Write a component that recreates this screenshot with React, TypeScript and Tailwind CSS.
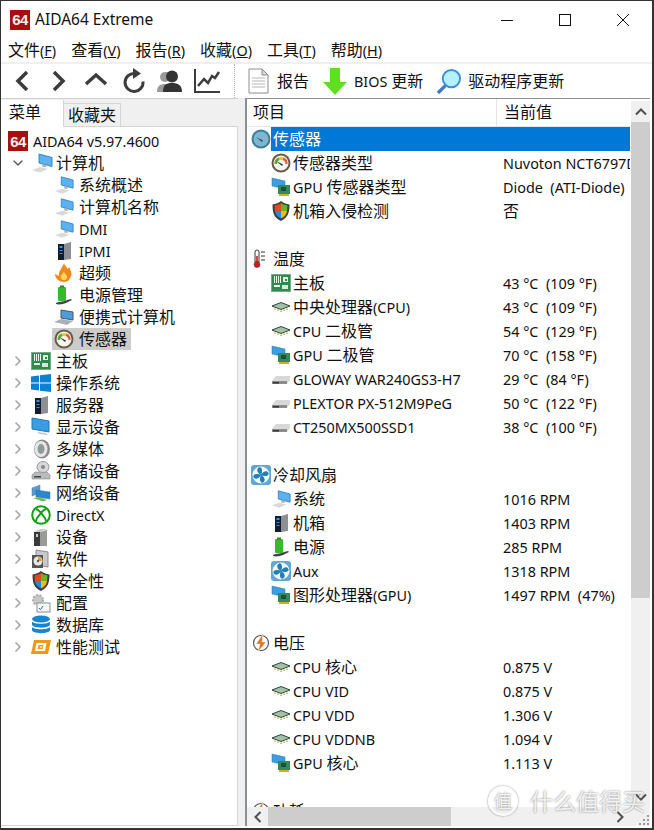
import React from 'react';
import { ChevronRight, ChevronDown } from 'lucide-react';

const CJK = /([\u2E80-\u9FFF]+)/;

// YaHei-looking mix: Chinese runs at 16px, latin runs a bit smaller
const T = ({ text }: { text: string }) => (
  <span className="whitespace-pre">
    {text.split(CJK).map((part, i) =>
      CJK.test(part) ? (
        <span key={i} className="text-[16px]">{part}</span>
      ) : (
        <span key={i} className="text-[14.4px]">{part}</span>
      ),
    )}
  </span>
);

const Logo64 = () => (
  <div className="w-5 h-5 bg-[#a80e0e] text-[#f4f0f0] font-bold flex items-center justify-center shrink-0 text-[15px] tracking-[-0.5px] font-['Liberation_Sans',sans-serif]">
    64
  </div>
);

const Monitor = () => (
  <svg width="22" height="20" viewBox="0 0 22 20">
    <path d="M8 1l13 3.500v9L8 10z" fill="#5ab2ee" stroke="#3a86c4" strokeWidth="1" />
    <path d="M1 17l8-3 8 2-8 3.500z" fill="#d9d9d9" />
    <path d="M11 11l.5 3h4l-1-2z" fill="#b0b0b0" />
  </svg>
);
const Server = () => (
  <svg width="20" height="20" viewBox="0 0 20 20">
    <path d="M4 3h6v16H4z" fill="#101c30" />
    <path d="M10 3l7-2v17l-7 1z" fill="#8d8f94" />
    <path d="M5.500 5h3v2h-3zM5.500 9h3v1h-3zM5.500 12h3v1h-3z" fill="#3d8fdc" />
  </svg>
);
const Flame = () => (
  <svg width="20" height="20" viewBox="0 0 20 20">
    <path d="M10 0c1 4 3 3 3 6 1-1 2-1 2-2 2 4 4 8 1 11-1 3-4 4-6 4-4 0-9-3-9-8l4 2C4 8 8 6 10 0z" fill="#f0891c" />
    <path d="M10 8c0 3 4 4 3 7-1 3-5 3-6 0-1-3 2-4 3-7z" fill="#fdd55a" />
  </svg>
);
const Battery = () => (
  <svg width="20" height="20" viewBox="0 0 20 20">
    <rect x="4" y="2" width="8" height="14" rx="1" fill="#38b82f" />
    <rect x="6" y="0.500" width="4" height="2" fill="#2c8c29" />
    <path d="M2 18c3-2 9-1 11-3l4-1 1 1-4 2c-3 2-9 3-12 2z" fill="#444" />
  </svg>
);
const Laptop = () => (
  <svg width="20" height="20" viewBox="0 0 20 20">
    <path d="M7 3l12 2v8l-12-2z" fill="#4a9de0" stroke="#555" />
    <path d="M0 15l7-3 12 2-6 4z" fill="#aab0b5" />
  </svg>
);
const Gauge = ({ dark = false }: { dark?: boolean }) => (
  <svg width="20" height="20" viewBox="0 0 20 20">
    <circle cx="10" cy="10" r="9.500" fill={dark ? '#3b7e9b' : '#6a5a44'} />
    <circle cx="10" cy="10" r="7.500" fill={dark ? '#7fb6cf' : '#f6f4ee'} />
    {!dark && <path d="M3.500 11a6.500 6.500 0 0 1 4-6.500L9 7a4 4 0 0 0-3 4z" fill="#54ae3a" />}
    {!dark && <path d="M7.500 4.500a6.500 6.500 0 0 1 5 0L11 7H9z" fill="#e9c22f" />}
    {!dark && <path d="M12.500 4.500a6.500 6.500 0 0 1 4 6.500h-2a4 4 0 0 0-3-4z" fill="#e4562c" />}
    <path d="M5 8l7 3.500-1 1.500z" fill={dark ? '#204f66' : '#333'} />
  </svg>
);
const Board = () => (
  <svg width="20" height="18" viewBox="0 0 20 18">
    <rect x="0.500" y="0.500" width="19" height="17" fill="#2f8a4d" stroke="#7aa88a" />
    <path d="M3 2h1v7H3zM5 2h1v7H5zM7 2h1v7H7zM9 2h1v7H9z" fill="#eef5ee" />
    <rect x="12" y="3" width="5" height="5" fill="#e5efe5" />
    <rect x="14" y="5" width="2" height="2" fill="#2f8a4d" />
    <rect x="3" y="11" width="6" height="2" fill="#eef5ee" />
    <rect x="11" y="11" width="6" height="4" fill="#d9e8dc" />
  </svg>
);
const Windows = () => (
  <svg width="20" height="20" viewBox="0 0 20 20">
    <path d="M0 3.500l8-1v7H0zM9 2.300L20 1v8.500H9zM0 10.500h8v7l-8-1zM9 10.500h11V19L9 17.700z" fill="#0f7fd0" />
  </svg>
);
const Display = () => (
  <svg width="20" height="20" viewBox="0 0 20 20">
    <path d="M1 1l17 3v11L1 12z" fill="#3a9de2" stroke="#2176b8" />
    <path d="M6 15l9 1 2 2-9-1z" fill="#c9c9c9" />
  </svg>
);
const Speaker = () => (
  <svg width="20" height="20" viewBox="0 0 20 20">
    <ellipse cx="11" cy="10" rx="8" ry="9.500" fill="#8b8b8b" />
    <ellipse cx="10" cy="10" rx="6.500" ry="8" fill="#e6e6e6" />
    <ellipse cx="10" cy="10" rx="3.500" ry="5" fill="#8f9a9a" />
  </svg>
);
const Storage = () => (
  <svg width="20" height="20" viewBox="0 0 20 20">
    <path d="M1 14l3-3h12l3 3v4H1z" fill="#b9bcbc" stroke="#777" strokeWidth="0.500" />
    <rect x="3" y="15" width="7" height="1.500" fill="#444" />
    <ellipse cx="12" cy="6" rx="6" ry="5.500" fill="#d8d8d8" stroke="#999" />
    <circle cx="12" cy="6" r="2" fill="#888" />
  </svg>
);
const Network = () => (
  <svg width="20" height="18" viewBox="0 0 20 18">
    <path d="M1 4l8-3v8l-8 3z" fill="#4a9de0" stroke="#777" strokeWidth="0.500" />
    <path d="M5 6l14 2v7L5 13z" fill="#2a86d0" stroke="#666" strokeWidth="0.500" />
    <path d="M2 14l6-1 8 3-4 1.500z" fill="#6bbb5a" />
  </svg>
);
const Xbox = () => (
  <svg width="20" height="20" viewBox="0 0 20 20">
    <circle cx="10" cy="10" r="8.800" fill="#fff" stroke="#12a012" strokeWidth="2" />
    <path d="M5 4c3 1 4 3 5 4 1-1 2-3 5-4M5 16c0-3 3-5 5-8 2 3 5 5 5 8" fill="none" stroke="#12a012" strokeWidth="2" />
  </svg>
);
const Device = () => (
  <svg width="20" height="20" viewBox="0 0 20 20">
    <path d="M3 5h6v14H3z" fill="#3a3a3a" />
    <path d="M9 5l7-2v16H9z" fill="#9a9a96" />
    <path d="M3 5l6-3h7L9 5z" fill="#c9c9c5" />
    <rect x="5" y="7" width="2" height="3" fill="#c9c9c5" />
  </svg>
);
const Software = () => (
  <svg width="20" height="20" viewBox="0 0 20 20">
    <path d="M5 1l12 2v15l-12-2z" fill="#c9c9c9" stroke="#8a8a8a" />
    <path d="M1 6h11v13H1z" fill="#555" />
    <circle cx="7" cy="12" r="4.500" fill="#e8e8e8" />
    <path d="M7 8a4.500 4.500 0 0 1 4 4H7z" fill="#ef9c2c" />
    <circle cx="7" cy="12" r="1.200" fill="#555" />
  </svg>
);
const Shield = () => (
  <svg width="20" height="20" viewBox="0 0 20 20">
    <path d="M10 0c2 2 5 3 8.500 3.500 0 8-1.500 13-8.500 16.500C3 17 1.500 12 1.500 3.500 5 3 8 2 10 0z" fill="#3d3d3d" />
    <path d="M10 2c-2 1.500-4 2-6.500 2.500L4 10h6z" fill="#e44a1f" />
    <path d="M10 2c2 1.500 4 2 6.500 2.500L16 10h-6z" fill="#6cb12c" />
    <path d="M4 10c.5 3 2 5.500 6 7.500V10z" fill="#1d8fd8" />
    <path d="M16 10c-.5 3-2 5.500-6 7.500V10z" fill="#f5bb14" />
  </svg>
);
const Config = () => (
  <svg width="20" height="20" viewBox="0 0 20 20">
    <circle cx="7" cy="7" r="5" fill="#c7c7c7" stroke="#aaa" strokeWidth="2" strokeDasharray="2 1.500" />
    <rect x="6" y="10" width="13" height="9" fill="#f4f6f7" stroke="#8d8d8d" />
    <path d="M8 15l1.500 1.500L12 13" fill="none" stroke="#2c6fb3" strokeWidth="1" />
  </svg>
);
const Database = () => (
  <svg width="20" height="20" viewBox="0 0 20 20">
    <ellipse cx="10" cy="4" rx="9" ry="3.500" fill="#1b84d0" />
    <path d="M1 6.500c2 3 16 3 18 0V10c-2 3.500-16 3.500-18 0z" fill="#1b84d0" />
    <path d="M1 12c2 3 16 3 18 0v3.500c-2 3.500-16 3.500-18 0z" fill="#1b84d0" />
  </svg>
);
const Benchmark = () => (
  <svg width="20" height="16" viewBox="0 0 20 16">
    <path d="M3 1h17l-3 14H0z" fill="#f2961c" />
    <path d="M5.500 4h10l-1.500 8H4z" fill="#fff" />
    <path d="M7.500 6h5l-.7 4H6.700z" fill="#f2961c" />
    <path d="M9.300 7.300h2l-.3 1.500H9z" fill="#fff" />
  </svg>
);
const Chip = () => (
  <svg width="20" height="12" viewBox="0 0 20 12">
    <path d="M10 1.500l9 3.500-9 3.500L1 5z" fill="#a5c0a8" stroke="#2f4a3a" />
    <path d="M4 7.500V9M7 8.500V10M10 9.500V11M13 8.500V10M16 7.500V9" stroke="#c09a2a" strokeWidth="1.200" />
  </svg>
);
const GpuCard = () => (
  <svg width="20" height="20" viewBox="0 0 20 20">
    <path d="M1 1l13 3v8L1 9z" fill="#3a9de2" stroke="#2a78b5" strokeWidth="0.500" />
    <rect x="7" y="8" width="12" height="9" fill="#2f8a5d" />
    <rect x="10" y="10" width="5" height="4" fill="#1c4f37" />
    <path d="M8 17h10v2H8z" fill="#d9a92a" />
  </svg>
);
const Disk = () => (
  <svg width="20" height="14" viewBox="0 0 20 14">
    <path d="M1 9l4-5h14v4l-3 4H1z" fill="#d8d8d8" />
    <path d="M1 9h15v3H1z" fill="#8d8d8d" />
    <rect x="2" y="10" width="6" height="1.500" fill="#333" />
  </svg>
);
const Thermo = () => (
  <svg width="20" height="20" viewBox="0 0 20 20">
    <rect x="4" y="1" width="4" height="13" rx="2" fill="#fff" stroke="#333" />
    <rect x="5.200" y="7" width="1.600" height="7" fill="#d6121a" />
    <circle cx="6" cy="15.500" r="3" fill="#d6121a" stroke="#333" strokeWidth="0.500" />
    <path d="M10 3h4M10 7h4M10 11h4" stroke="#333" strokeWidth="1" />
  </svg>
);
const Fan = () => (
  <svg width="20" height="20" viewBox="0 0 20 20">
    <rect width="20" height="20" rx="3" fill="#5fa8d3" />
    <rect x="1.500" y="1.500" width="17" height="17" rx="8.500" fill="#f4f8fa" />
    <path d="M10 10C6 8 5 4 8 2.500c3-1 4 4 2 7.500zM10 10c2-4 6-5 7.500-2 1 3-4 4-7.500 2zM10 10c4 2 5 6 2 7.500-3 1-4-4-2-7.500zM10 10c-2 4-6 5-7.500 2-1-3 4-4 7.500-2z" fill="#1f7fb8" />
  </svg>
);
const Volt = () => (
  <svg width="20" height="20" viewBox="0 0 20 20">
    <circle cx="10" cy="10" r="7.500" fill="#fff" stroke="#555" strokeWidth="1.200" />
    <path d="M12 1L5 11h4l-2 8 8-10h-4z" fill="#e2701e" stroke="#fff" strokeWidth="0.500" />
  </svg>
);

type TreeRow = { icon: React.ReactNode; label: string; selected?: boolean };

const computerKids: TreeRow[] = [
  { icon: <Monitor />, label: '系统概述' },
  { icon: <Monitor />, label: '计算机名称' },
  { icon: <Monitor />, label: 'DMI' },
  { icon: <Server />, label: 'IPMI' },
  { icon: <Flame />, label: '超频' },
  { icon: <Battery />, label: '电源管理' },
  { icon: <Laptop />, label: '便携式计算机' },
  { icon: <Gauge />, label: '传感器', selected: true },
];

const topLevel: TreeRow[] = [
  { icon: <Board />, label: '主板' },
  { icon: <Windows />, label: '操作系统' },
  { icon: <Server />, label: '服务器' },
  { icon: <Display />, label: '显示设备' },
  { icon: <Speaker />, label: '多媒体' },
  { icon: <Storage />, label: '存储设备' },
  { icon: <Network />, label: '网络设备' },
  { icon: <Xbox />, label: 'DirectX' },
  { icon: <Device />, label: '设备' },
  { icon: <Software />, label: '软件' },
  { icon: <Shield />, label: '安全性' },
  { icon: <Config />, label: '配置' },
  { icon: <Database />, label: '数据库' },
  { icon: <Benchmark />, label: '性能测试' },
];

type Section = {
  icon: React.ReactNode;
  title: string;
  rows: { icon: React.ReactNode; label: string; value: string }[];
};

const sections: Section[] = [
  {
    icon: <Gauge dark />,
    title: '传感器',
    rows: [
      { icon: <Gauge />, label: '传感器类型', value: 'Nuvoton NCT6797D' },
      { icon: <GpuCard />, label: 'GPU 传感器类型', value: 'Diode  (ATI-Diode)' },
      { icon: <Shield />, label: '机箱入侵检测', value: '否' },
    ],
  },
  {
    icon: <Thermo />,
    title: '温度',
    rows: [
      { icon: <Board />, label: '主板', value: '43 °C  (109 °F)' },
      { icon: <Chip />, label: '中央处理器(CPU)', value: '43 °C  (109 °F)' },
      { icon: <Chip />, label: 'CPU 二极管', value: '54 °C  (129 °F)' },
      { icon: <GpuCard />, label: 'GPU 二极管', value: '70 °C  (158 °F)' },
      { icon: <Disk />, label: 'GLOWAY WAR240GS3-H7', value: '29 °C  (84 °F)' },
      { icon: <Disk />, label: 'PLEXTOR PX-512M9PeG', value: '50 °C  (122 °F)' },
      { icon: <Disk />, label: 'CT250MX500SSD1', value: '38 °C  (100 °F)' },
    ],
  },
  {
    icon: <Fan />,
    title: '冷却风扇',
    rows: [
      { icon: <Monitor />, label: '系统', value: '1016 RPM' },
      { icon: <Server />, label: '机箱', value: '1403 RPM' },
      { icon: <Battery />, label: '电源', value: '285 RPM' },
      { icon: <Fan />, label: 'Aux', value: '1318 RPM' },
      { icon: <GpuCard />, label: '图形处理器(GPU)', value: '1497 RPM  (47%)' },
    ],
  },
  {
    icon: <Volt />,
    title: '电压',
    rows: [
      { icon: <Chip />, label: 'CPU 核心', value: '0.875 V' },
      { icon: <Chip />, label: 'CPU VID', value: '0.875 V' },
      { icon: <Chip />, label: 'CPU VDD', value: '1.306 V' },
      { icon: <Chip />, label: 'CPU VDDNB', value: '1.094 V' },
      { icon: <GpuCard />, label: 'GPU 核心', value: '1.113 V' },
    ],
  },
  { icon: <Volt />, title: '功耗', rows: [] },
];

const IconBox = ({ children }: { children: React.ReactNode }) => (
  <span className="w-5 h-5 flex items-center justify-center shrink-0">{children}</span>
);

const MenuItem = ({ name, hotkey }: { name: string; hotkey: string }) => (
  <span className="whitespace-pre">
    <span className="text-[16px]">{name}</span>
    <span className="text-[14.4px]">(<u>{hotkey}</u>)</span>
  </span>
);

const ToolIcon = ({ children }: { children: React.ReactNode }) => (
  <div className="w-[37px] h-full flex items-center justify-center shrink-0">{children}</div>
);

const Caret = ({ d, size = 12 }: { d: string; size?: number }) => (
  <svg width={size} height={size} viewBox="0 0 12 12" fill="none">
    <path d={d} stroke="#505050" strokeWidth="2" />
  </svg>
);

export default function App() {
  return (
    <div className="relative w-[654px] h-[830px] bg-white flex flex-col overflow-hidden border-l border-t border-r-2 border-b-2 border-[#333] text-[#111] font-['Noto_Sans','Noto_Sans_CJK_SC',sans-serif] leading-none">
      {/* title bar */}
      <div className="h-[37px] flex items-center pl-[9px] shrink-0">
        <Logo64 />
        <span className="ml-[5px] text-[15.5px]">AIDA64 Extreme</span>
        <div className="ml-auto flex items-center pr-[23px] gap-[46px]">
          <svg width="12" height="12" viewBox="0 0 12 12"><path d="M0 6.500h12" stroke="#111" /></svg>
          <svg width="12" height="12" viewBox="0 0 12 12"><rect x="0.500" y="0.500" width="11" height="11" fill="none" stroke="#111" /></svg>
          <svg width="12" height="12" viewBox="0 0 12 12"><path d="M0 0l12 12M12 0L0 12" stroke="#111" /></svg>
        </div>
      </div>

      {/* menu */}
      <div className="h-[24px] flex items-center pl-[7px] gap-[15px] shrink-0">
        <MenuItem name="文件" hotkey="F" />
        <MenuItem name="查看" hotkey="V" />
        <MenuItem name="报告" hotkey="R" />
        <MenuItem name="收藏" hotkey="O" />
        <MenuItem name="工具" hotkey="T" />
        <MenuItem name="帮助" hotkey="H" />
      </div>
      <div className="h-[2px] bg-[#f0f0f0] shrink-0" />

      {/* toolbar */}
      <div className="h-[34px] flex items-center pl-[2px] shrink-0">
        <ToolIcon>
          <svg width="14" height="22" viewBox="0 0 14 22" fill="none"><path d="M12 2L3 11l9 9" stroke="#3c3c3c" strokeWidth="3.500" /></svg>
        </ToolIcon>
        <ToolIcon>
          <svg width="14" height="22" viewBox="0 0 14 22" fill="none"><path d="M2 2l9 9-9 9" stroke="#3c3c3c" strokeWidth="3.500" /></svg>
        </ToolIcon>
        <ToolIcon>
          <svg className="mb-[4px]" width="24" height="14" viewBox="0 0 24 14" fill="none"><path d="M2 12L12 3l10 9" stroke="#3c3c3c" strokeWidth="3.500" /></svg>
        </ToolIcon>
        <ToolIcon>
          <svg width="24" height="26" viewBox="0 0 24 26" fill="none">
            <path d="M14 5.500a9 9 0 1 0 8 8" stroke="#3c3c3c" strokeWidth="3" />
            <path d="M12 0l8 5.500-8 5.500z" fill="#3c3c3c" />
          </svg>
        </ToolIcon>
        <ToolIcon>
          <svg width="26" height="22" viewBox="0 0 26 22">
            <circle cx="8" cy="7" r="5" fill="#9a9a9a" />
            <path d="M0 22c0-6 3-8 8-8s8 2 8 8z" fill="#9a9a9a" />
            <circle cx="15" cy="6.500" r="6" fill="#333" />
            <path d="M6 22c0-7 3-9 9-9s10 2 10 9z" fill="#333" />
          </svg>
        </ToolIcon>
        <ToolIcon>
          <svg width="26" height="24" viewBox="0 0 26 24" fill="none">
            <path d="M1 0v23h25" stroke="#3c3c3c" strokeWidth="2" />
            <path d="M4 17l6-7 4 4 4-7 3 2 4-6" stroke="#3c3c3c" strokeWidth="2.500" />
          </svg>
        </ToolIcon>
        <div className="h-full ml-[9px] border-l border-dotted border-[#b5b5b5]" />
        <svg className="ml-[13px]" width="21" height="26" viewBox="0 0 21 26">
          <path d="M1 1h13l6 6v18H1z" fill="#fff" stroke="#8d8d8d" />
          <path d="M14 1v6h6z" fill="#d8d8d8" stroke="#8d8d8d" />
          <path d="M4 10h13M4 13h13M4 16h13M4 19h13" stroke="#b5b5b5" />
        </svg>
        <span className="ml-[8px]"><T text="报告" /></span>
        <svg className="ml-[13px]" width="26" height="29" viewBox="0 0 26 29">
          <path d="M8 1h10v14h7L13 28 1 15h7z" fill="#5ee01e" />
        </svg>
        <span className="ml-[6px]"><T text="BIOS 更新" /></span>
        <svg className="ml-[13px]" width="26" height="27" viewBox="0 0 27 28" fill="none">
          <path d="M2 26l8-8" stroke="#3d7cc0" strokeWidth="3.500" />
          <circle cx="16" cy="11" r="9" fill="#b5f2ff" stroke="#3d8fdc" strokeWidth="2" />
        </svg>
        <span className="ml-[6px]"><T text="驱动程序更新" /></span>
      </div>

      {/* panels */}
      <div className="flex flex-1 min-h-0 pb-[2px]">
        {/* left panel */}
        <div className="w-[237px] shrink-0 flex flex-col bg-[#f0f0f0] border-t border-[#d0d0d0]">
          <div className="h-[28px] flex items-end shrink-0">
            <div className="w-[63px] h-[27px] flex items-center pl-[8px] pb-[2px] border-r border-[#d5d5d5] bg-white"><T text="菜单" /></div>
            <div className="w-[57px] h-[24px] flex items-center justify-center border-t border-r border-b border-[#d5d5d5]"><T text="收藏夹" /></div>
            <div className="flex-1 border-b border-[#d5d5d5]" />
          </div>
          <div className="flex-1 overflow-hidden pt-[3px] pl-[6px] bg-white border-r border-b border-[#d5d5d5]">
            <div className="h-[22px] flex items-center gap-[5px] pl-[1px]">
              <Logo64 />
              <T text="AIDA64 v5.97.4600" />
            </div>
            <div className="h-[22px] flex items-center">
              <span className="w-[22px] flex justify-center"><ChevronDown size={16} color="#555" /></span>
              <span className="ml-[2px]"><Monitor /></span>
              <span className="ml-[3px]"><T text="计算机" /></span>
            </div>
            {computerKids.map((row) => (
              <div key={row.label} className="h-[22px] flex items-center pl-[45px]">
                <span className={`flex items-center h-[22px] pl-[2px] pr-[4px] ${row.selected ? 'bg-[#cccccc]' : ''}`}>
                  <IconBox>{row.icon}</IconBox>
                  <span className="ml-[5px]"><T text={row.label} /></span>
                </span>
              </div>
            ))}
            {topLevel.map((row) => (
              <div key={row.label} className="h-[22px] flex items-center">
                <span className="w-[22px] flex justify-center"><ChevronRight size={16} color="#a6a6a6" strokeWidth={2.5} /></span>
                <span className="ml-[2px]"><IconBox>{row.icon}</IconBox></span>
                <span className="ml-[5px]"><T text={row.label} /></span>
              </div>
            ))}
          </div>
        </div>

        {/* splitter */}
        <div className="w-[7px] bg-[#f0f0f0] shrink-0" />

        {/* right panel */}
        <div className="w-[405px] shrink-0 flex flex-col border-l-2 border-t border-[#8a8f94]">
          <div className="flex-1 min-h-0 flex">
            <div className="w-[383px] shrink-0 flex flex-col overflow-hidden">
              <div className="h-[28px] flex shrink-0 items-center border-b border-[#e5e5e5]">
                <div className="w-[250px] pl-[6px] border-r border-[#e5e5e5] h-full flex items-center"><T text="项目" /></div>
                <div className="pl-[7px]"><T text="当前值" /></div>
              </div>
              <div>
                {sections.map((section, i) => (
                  <div key={section.title} className="mb-[24px]">
                    <div className="h-[24px] flex items-center pl-[4px]">
                      <IconBox>{section.icon}</IconBox>
                      <span className={`h-[24px] flex items-center pl-[2px] ${i === 0 ? 'bg-[#0078d7] text-white flex-1' : ''}`}><T text={section.title} /></span>
                    </div>
                    {section.rows.map((row) => (
                      <div key={row.label} className="h-[24px] flex items-center">
                        <span className="pl-[24px] flex items-center w-[256px] shrink-0">
                          <IconBox>{row.icon}</IconBox>
                          <span className="ml-[2px]"><T text={row.label} /></span>
                        </span>
                        <T text={row.value} />
                      </div>
                    ))}
                  </div>
                ))}
              </div>
            </div>
            {/* vertical scrollbar */}
            <div className="w-[19px] ml-[1px] mt-[2px] shrink-0 bg-[#f0f0f0] flex flex-col">
              <div className="h-[21px] flex items-center justify-center"><Caret d="M1 8.500L6 3.500l5 5" /></div>
              <div className="h-[476px] bg-[#cdcdcd]" />
              <div className="mt-auto h-[21px] flex items-center justify-center"><Caret d="M1 3.500L6 8.500l5-5" /></div>
            </div>
          </div>
          {/* horizontal scrollbar */}
          <div className="h-[19px] shrink-0 bg-[#f0f0f0] flex items-stretch">
            <div className="w-[21px] flex items-center justify-center"><Caret d="M8.500 1L3.500 6l5 5" /></div>
            <div className="w-[183px] bg-[#cdcdcd]" />
            <div className="flex-1 flex items-center justify-end pr-[24px]">
              <span className="relative z-10"><Caret d="M3.500 1L8.500 6l-5 5" /></span>
            </div>
          </div>
        </div>
      </div>

      {/* watermark over the corner */}
      <div className="absolute right-[7px] bottom-[12px] flex items-center gap-[12px] text-white/85 [text-shadow:0_0_2px_#707070] pointer-events-none">
        <span className="w-[30px] h-[30px] rounded-full border-2 border-white/85 flex items-center justify-center text-[18px] shadow-[0_0_2px_#707070]">值</span>
        <span className="text-[23px] whitespace-nowrap">什么值得买</span>
      </div>
      <div className="absolute right-[3px] bottom-[3px] grid grid-cols-3 gap-[2px]">
        {[0, 1, 2, 3, 4, 5, 6, 7, 8].map((n) => (
          <span key={n} className={`w-[2px] h-[2px] ${n === 0 || n === 1 || n === 3 ? 'bg-transparent' : 'bg-[#9a9a9a]'}`} />
        ))}
      </div>
    </div>
  );
}
